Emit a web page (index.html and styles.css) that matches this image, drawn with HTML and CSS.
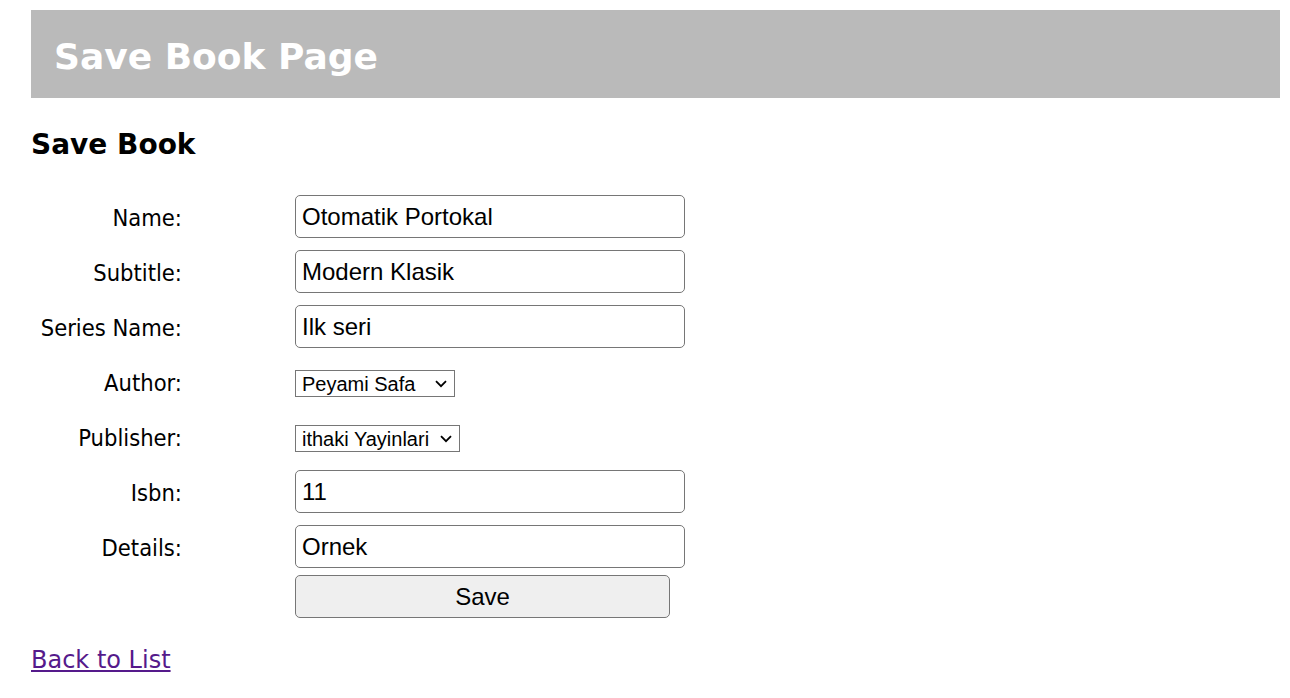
FILE: index.html
```html
<!DOCTYPE html>
<html>
<head>
<meta charset="utf-8">
<link rel="stylesheet" href="styles.css">
</head>
<body>
<header class="banner"><h1 class="banner-title">Save Book Page</h1></header>
<h2 class="section-title">Save Book</h2>
<form class="book-form">
  <label class="form-label">Name:</label>
  <div class="form-field"><input class="text-input" type="text" value="Otomatik Portokal"></div>
  <label class="form-label">Subtitle:</label>
  <div class="form-field"><input class="text-input" type="text" value="Modern Klasik"></div>
  <label class="form-label">Series Name:</label>
  <div class="form-field"><input class="text-input" type="text" value="Ilk seri"></div>
  <label class="form-label">Author:</label>
  <div class="form-field">
    <span class="select-wrap author-select">
      <select class="select-input"><option>Peyami Safa</option></select>
      <svg class="select-arrow" width="12" height="8" viewBox="0 0 12 8"><path d="M1 1.2 L6 6.2 L11 1.2" fill="none" stroke="#000" stroke-width="1.8"/></svg>
    </span>
  </div>
  <label class="form-label">Publisher:</label>
  <div class="form-field">
    <span class="select-wrap publisher-select">
      <select class="select-input"><option>ithaki Yayinlari</option></select>
      <svg class="select-arrow" width="12" height="8" viewBox="0 0 12 8"><path d="M1 1.2 L6 6.2 L11 1.2" fill="none" stroke="#000" stroke-width="1.8"/></svg>
    </span>
  </div>
  <label class="form-label">Isbn:</label>
  <div class="form-field"><input class="text-input" type="text" value="11"></div>
  <label class="form-label">Details:</label>
  <div class="form-field"><input class="text-input" type="text" value="Ornek"></div>
  <div class="form-label"></div>
  <div class="form-field button-field"><button class="save-button" type="button">Save</button></div>
</form>
<a class="back-link" href="#">Back to List</a>
</body>
</html>
```

FILE: styles.css
```css
html, body {
  margin: 0;
  background: #ffffff;
}
body {
  padding: 10px 10px 0 31px;
  font-family: "DejaVu Sans", Verdana, sans-serif;
  color: #000;
}
.banner {
  background: #bababa;
  height: 88px;
  display: flex;
  align-items: center;
  padding-left: 23px;
}
.banner-title {
  margin: 4px 0 0 0;
  color: #ffffff;
  font-size: 36px;
  font-weight: bold;
}
.section-title {
  margin: 30px 0 0 0;
  font-size: 28px;
  font-weight: bold;
  line-height: 34px;
}
.book-form {
  margin-top: 33px;
  display: grid;
  grid-template-columns: 151px 390px;
  column-gap: 113px;
  row-gap: 12px;
  align-items: center;
}
.form-label {
  text-align: right;
  font-family: "DejaVu Sans Condensed", Tahoma, sans-serif;
  font-size: 23.5px;
  line-height: 28px;
  margin-top: 2px;
}
.form-field {
  height: 43px;
  display: flex;
  align-items: center;
}
.text-input {
  box-sizing: border-box;
  width: 390px;
  height: 43px;
  border: 1px solid #767676;
  border-radius: 5px;
  padding: 0 6px;
  font-family: "Liberation Sans", Arial, sans-serif;
  font-size: 24px;
  color: #000;
  background: #fff;
}
.select-wrap {
  position: relative;
  display: inline-block;
  height: 27px;
  margin-top: 4px;
}
.select-input {
  -webkit-appearance: none;
  appearance: none;
  box-sizing: border-box;
  width: 100%;
  height: 27px;
  border: 1px solid #767676;
  border-radius: 0;
  font-family: "Liberation Sans", Arial, sans-serif;
  font-size: 20px;
  color: #000;
  background: #fff;
  padding: 0 0 0 6px;
  margin: 0;
}
.select-arrow {
  position: absolute;
  right: 8px;
  top: 10px;
  pointer-events: none;
}
.author-select { width: 160px; }
.publisher-select { width: 165px; }
.button-field {
  margin-top: -5px;
}
.save-button {
  box-sizing: border-box;
  width: 375px;
  height: 43px;
  border: 1px solid #767676;
  border-radius: 5px;
  background: #efefef;
  font-family: "Liberation Sans", Arial, sans-serif;
  font-size: 24px;
  color: #000;
}
.back-link {
  display: inline-block;
  margin-top: 28px;
  font-size: 24px;
  color: #551a8b;
}
```
